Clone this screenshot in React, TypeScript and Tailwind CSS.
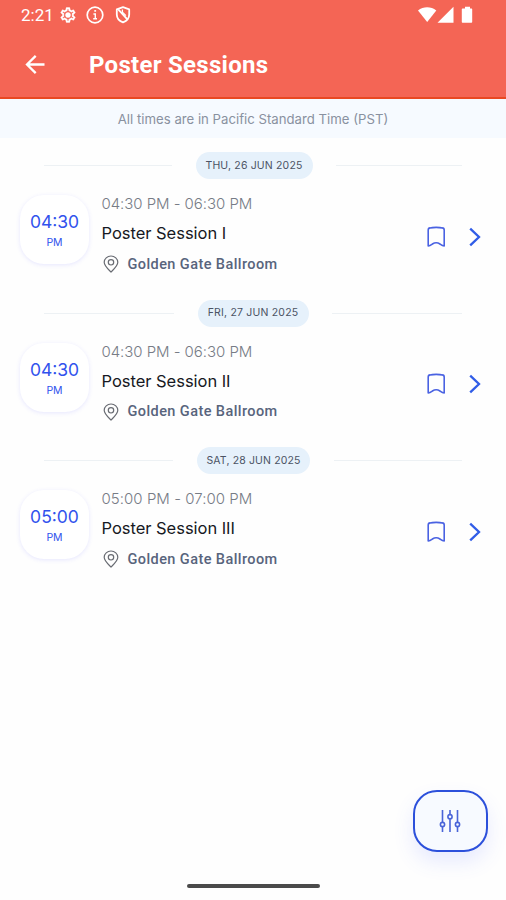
import React from 'react';

type Session = {
  date: string;
  start: string;
  period: string;
  time: string;
  title: string;
  room: string;
  pillClass: string;
  leftLineClass: string;
  rightLineClass: string;
  timeClass: string;
};

const sessions: Session[] = [
  {
    date: 'THU, 26 JUN 2025',
    start: '04:30',
    period: 'PM',
    time: '04:30 PM - 06:30 PM',
    title: 'Poster Session I',
    room: 'Golden Gate Ballroom',
    pillClass: 'w-[117px] tracking-[0.17px]',
    leftLineClass: 'w-[128px]',
    rightLineClass: 'w-[126px]',
    timeClass: 'tracking-[-0.05px]',
  },
  {
    date: 'FRI, 27 JUN 2025',
    start: '04:30',
    period: 'PM',
    time: '04:30 PM - 06:30 PM',
    title: 'Poster Session II',
    room: 'Golden Gate Ballroom',
    pillClass: 'w-[111px] tracking-[0.2px]',
    leftLineClass: 'w-[130px]',
    rightLineClass: 'w-[130px]',
    timeClass: 'tracking-[-0.05px]',
  },
  {
    date: 'SAT, 28 JUN 2025',
    start: '05:00',
    period: 'PM',
    time: '05:00 PM - 07:00 PM',
    title: 'Poster Session III',
    room: 'Golden Gate Ballroom',
    pillClass: 'w-[113px] tracking-[0.14px]',
    leftLineClass: 'w-[129px]',
    rightLineClass: 'w-[128px]',
    timeClass: 'tracking-[0.04px]',
  },
];

const GearIcon = () => (
  <svg width="18" height="18" viewBox="0 0 24 24" fill="white" stroke="white" strokeWidth="0.5">
    <path d="M19.43 12.98c.04-.32.07-.64.07-.98 0-.34-.03-.66-.07-.98l2.11-1.65c.19-.15.24-.42.12-.64l-2-3.46c-.09-.16-.26-.25-.44-.25-.06 0-.12.01-.17.03l-2.49 1c-.52-.4-1.08-.73-1.69-.98l-.38-2.65C14.46 2.18 14.25 2 14 2h-4c-.25 0-.46.18-.49.42l-.38 2.65c-.61.25-1.17.59-1.69.98l-2.49-1c-.06-.02-.12-.03-.18-.03-.17 0-.34.09-.43.25l-2 3.46c-.13.22-.07.49.12.64l2.11 1.65c-.04.32-.07.65-.07.98 0 .33.03.66.07.98l-2.11 1.65c-.19.15-.24.42-.12.64l2 3.46c.09.16.26.25.44.25.06 0 .12-.01.17-.03l2.49-1c.52.4 1.08.73 1.69.98l.38 2.65c.03.24.24.42.49.42h4c.25 0 .46-.18.49-.42l.38-2.65c.61-.25 1.17-.59 1.69-.98l2.49 1c.06.02.12.03.18.03.17 0 .34-.09.43-.25l2-3.46c.12-.22.07-.49-.12-.64l-2.11-1.65zm-1.98-1.71c.04.31.05.52.05.73 0 .21-.02.43-.05.73l-.14 1.13.89.7 1.08.84-.7 1.21-1.27-.51-1.04-.42-.9.68c-.43.32-.84.56-1.25.73l-1.06.43-.16 1.13-.2 1.35h-1.4l-.19-1.35-.16-1.13-1.06-.43c-.43-.18-.83-.41-1.23-.71l-.91-.7-1.06.43-1.27.51-.7-1.21 1.08-.84.89-.7-.14-1.13c-.03-.31-.05-.54-.05-.74s.02-.43.05-.73l.14-1.13-.89-.7-1.08-.84.7-1.21 1.27.51 1.04.42.9-.68c.43-.32.84-.56 1.25-.73l1.06-.43.16-1.13.2-1.35h1.39l.19 1.35.16 1.13 1.06.43c.43.18.83.41 1.23.71l.91.7 1.06-.43 1.27-.51.7 1.21-1.07.85-.89.7.14 1.13z" />
    <circle cx="12" cy="12" r="3.4" />
  </svg>
);

const InfoIcon = () => (
  <svg width="18" height="18" viewBox="0 0 18 18" fill="none" stroke="white">
    <circle cx="9" cy="9" r="7.8" strokeWidth="1.7" />
    <path d="M7.4 8h1.9v4.6M7.2 12.7h3.8" strokeWidth="1.4" />
    <path d="M8.3 4.9h1.8" strokeWidth="1.7" />
  </svg>
);

const ShieldIcon = () => (
  <svg width="16" height="18" viewBox="0 0 16 18" fill="none" stroke="white" strokeWidth="1.8">
    <path d="M8 1.2 14.2 3.4v5c0 3.7-2.5 6.5-6.2 8-3.7-1.5-6.2-4.3-6.2-8v-5z" strokeLinejoin="round" />
    <path d="M3.2 3.4 12.6 13.6" />
    <path d="M7.4 3.6v2.6l3.6 3.4" strokeWidth="1.3" />
  </svg>
);

const BookmarkIcon = () => (
  <svg width="20" height="22" viewBox="0 0 20 22" fill="none" stroke="#4a62e2" strokeWidth="1.6" strokeLinejoin="round">
    <path d="M2.2 20V4c0-1.3.7-2 1.9-2.1 2-.7 10.2-.7 12.2 0 1.2.1 1.9.8 1.9 2.1v16c-1.9-.3-3-1.2-4.2-2-2.3-1.5-5.3-1.5-7.6 0-1.2.8-2.3 1.7-4.2 2z" />
  </svg>
);

const PinIcon = () => (
  <svg width="16" height="18" viewBox="0 0 16 18" fill="none" stroke="#686b72" strokeWidth="1.2">
    <path d="M8 17C5.5 14.5 1.2 10.9 1.2 7.3a6.8 6.3 0 0 1 13.6 0C14.8 10.9 10.5 14.5 8 17z" strokeLinejoin="round" />
    <circle cx="8" cy="7.3" r="2.7" />
  </svg>
);

const SessionBlock = ({ session }: { session: Session }) => (
  <section className="h-[147.7px] pt-[14px]">
    <div className="flex h-[27px] items-center justify-between pr-[44px] pl-11">
      <span className={`h-px bg-[#edf1f4] ${session.leftLineClass}`} />
      <span
        className={`flex h-[27px] items-center justify-center rounded-full bg-[#e6f1fb] text-[10.5px] whitespace-nowrap text-[#4b5364] ${session.pillClass}`}
      >
        {session.date}
      </span>
      <span className={`h-px bg-[#edf1f4] ${session.rightLineClass}`} />
    </div>
    <div className="flex pt-[14px] pl-5">
      <div className="mt-[2px] flex h-[69px] w-[69px] flex-col items-center rounded-[24px] bg-white pt-[16px] text-[#3152ed] shadow-[0_1px_4px_rgba(95,95,255,0.15)]">
        <span className="text-[17.5px] leading-[21px]">{session.start}</span>
        <span className="mt-[5px] text-[10.5px] leading-3">{session.period}</span>
      </div>
      <div className="ml-[12.5px] flex-1">
        <p className={`pt-px text-[15px] leading-5 font-light whitespace-nowrap text-[#777c86] ${session.timeClass}`}>{session.time}</p>
        <p className="mt-[9px] text-[16.5px] leading-5 tracking-[-0.03px] whitespace-nowrap text-[#171923]">{session.title}</p>
        <div className="mt-[11px] flex h-5 items-center gap-[9px] pl-px">
          <PinIcon />
          <span className="pt-px font-[Roboto,sans-serif] text-[14.5px] font-medium tracking-[0.42px] whitespace-nowrap text-[#58647c]">
            {session.room}
          </span>
        </div>
      </div>
      <div className="flex h-[87px] items-center pr-6">
        <BookmarkIcon />
        <svg className="ml-[22px]" width="14" height="20" viewBox="0 0 14 20" fill="none" stroke="#315de7" strokeWidth="2.3">
          <path d="m2.2 1.7 8.8 8.3-8.8 8.3" />
        </svg>
      </div>
    </div>
  </section>
);

const App = () => {
  return (
    <div className="relative flex h-[900px] w-[506px] flex-col overflow-hidden bg-[#fefefe] font-[Inter,sans-serif]">
      <header className="h-[99px] border-b-2 border-[#e94822] bg-[#f46555] font-[Roboto,sans-serif] text-white">
        <div className="flex h-[30px] items-center pl-[21px]">
          <span className="w-[38px] text-[17px] leading-5">2:21</span>
          <GearIcon />
          <span className="ml-[9px]">
            <InfoIcon />
          </span>
          <span className="ml-[11px]">
            <ShieldIcon />
          </span>
          <svg className="mr-[33px] ml-auto" width="55" height="18" viewBox="0 0 55 18" fill="white">
            <path d="M0 4.5C5.3.2 13 .2 18.3 4.5L9.2 16z" />
            <path d="M19.5 16.7 35.5.8v15.9z" />
            <path d="M45 2.4h2V.8h5v1.6h1.2c.7 0 1 .4 1 1v12.4c0 .7-.4 1-1 1h-8.4c-.7 0-1-.3-1-1V3.4c0-.6.4-1 1.2-1z" />
          </svg>
        </div>
        <div className="flex h-[70px] items-center pl-[25px]">
          <svg width="21" height="20" viewBox="0 0 21 20" fill="none" stroke="white" strokeWidth="2.3">
            <path d="M19.5 9.5H2M10.7.9 2 9.5l8.7 8.6" />
          </svg>
          <h1 className="ml-[43px] text-[24px] leading-7 font-bold tracking-[0.28px]">Poster Sessions</h1>
        </div>
      </header>
      <p className="flex h-[39px] items-center justify-center bg-[#f6faff] pt-[2px] text-[13.2px] whitespace-nowrap text-[#8991a0]">
        All times are in Pacific Standard Time (PST)
      </p>
      <main className="flex-1">
        {sessions.map((session) => (
          <SessionBlock key={session.date} session={session} />
        ))}
      </main>
      <button
        aria-label="Filter sessions"
        className="absolute right-[18px] bottom-[48px] flex h-[62px] w-[75px] items-center justify-center rounded-[24px] border-2 border-[#2c50db] bg-[#f7faff] shadow-[0_10px_20px_rgba(80,100,255,0.13)]"
      >
        <svg className="mr-px" width="22" height="24" viewBox="0 0 22 24" fill="none" stroke="#4964d8" strokeWidth="1.6">
          <path d="M3.5 1v12M3.5 18v5M11 1v4M11 10v13M18.5 1v12M18.5 18v5" />
          <circle cx="3.5" cy="15.5" r="2.1" />
          <circle cx="11" cy="7.7" r="2.1" />
          <circle cx="18.5" cy="15.5" r="2.1" />
        </svg>
      </button>
      <div className="mb-[12px] ml-px h-[4px] w-[133px] self-center rounded-full bg-[#4a4a4a]" />
    </div>
  );
};

export default App;
